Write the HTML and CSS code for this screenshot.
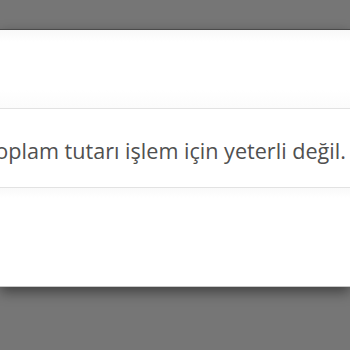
FILE: index.html
```html
<!DOCTYPE html>
<html lang="tr">
<head>
<meta charset="utf-8">
<link rel="stylesheet" href="styles.css">
</head>
<body>
<div class="backdrop">
  <div class="modal">
    <div class="modal-header"></div>
    <div class="modal-body">
      <p class="message">Sepet toplam tutarı işlem için yeterli değil.</p>
    </div>
    <div class="modal-footer"></div>
  </div>
</div>
</body>
</html>
```
FILE: styles.css
```css
html, body {
  margin: 0;
  padding: 0;
  height: 100%;
  overflow: hidden;
}
body {
  background: #767676;
  font-family: "Open Sans", "Noto Sans", sans-serif;
}
.backdrop {
  padding-top: 29px;
}
.modal {
  background: #fff;
  border-top: 1px solid #4a4a4a;
  border-bottom: 1px solid #c8c8c8;
  box-shadow: 0 5px 12px rgba(0, 0, 0, 0.45);
}
.modal-header {
  height: 78px;
  background: linear-gradient(#f8f8f8, #fff 12px, #fff 60px, #fbfbfb);
  border-bottom: 1px solid #e2e2e2;
}
.modal-body {
  height: 78px;
  display: flex;
  align-items: center;
  overflow: hidden;
}
.message {
  margin: 4px 0 0 -75px;
  white-space: nowrap;
  font-size: 21.6px;
  color: #505050;
}
.modal-footer {
  height: 98px;
  border-top: 1px solid #e2e2e2;
  background: linear-gradient(#f9f9f9, #fff 10px);
}
```
